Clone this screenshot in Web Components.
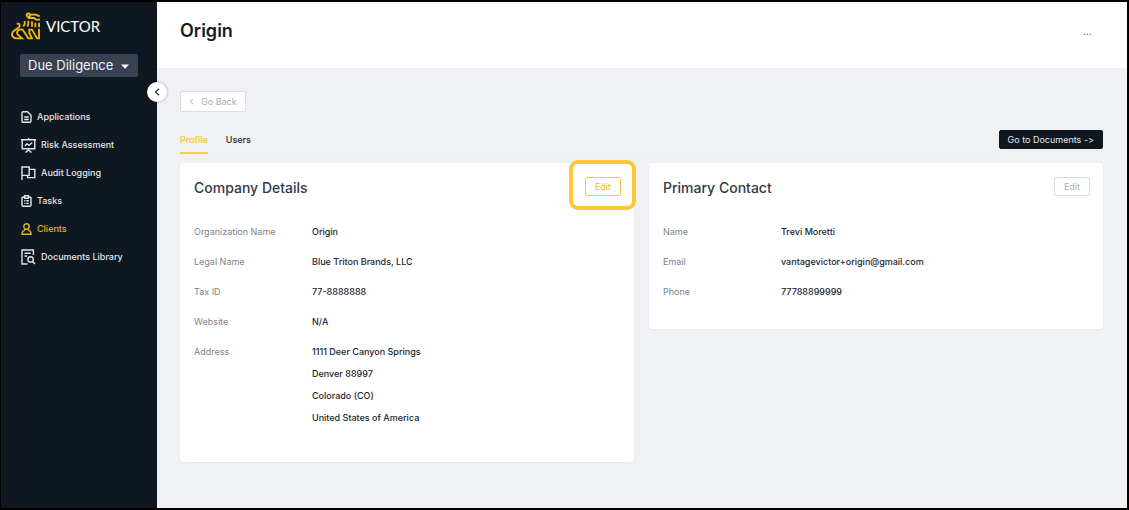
<!DOCTYPE html>
<html lang="en">
<head>
<meta charset="utf-8">
<meta name="viewport" content="width=device-width, initial-scale=1">
<title>Victor – Origin</title>
<style>
  :root {
    --ink: #0f1720;
    --gold: #f9c22e;
    --text: #1c2430;
    --muted: #7c838e;
    --canvas: #eff1f5;
    --line: #dcdde0;
  }
  body { margin: 0; font: 500 9px/22px Inter, "Liberation Sans", sans-serif; color: var(--text); }
</style>
</head>
<body>
<victor-app></victor-app>

<template id="t-app">
  <style>
    :host { display: grid; grid-template-columns: 156px minmax(0, 1fr); min-height: 100vh; box-sizing: border-box;
      border: 2px solid #000; border-left-width: 1px; background: var(--canvas); }
    main { padding: 23px 24px 44px 23px; }
    .bar { display: flex; justify-content: space-between; align-items: flex-start; margin: 18px 0 9px; }
    .cards { display: grid; grid-template-columns: 1fr 1fr; gap: 15px; align-items: start; }
    ul { list-style: none; margin: 0; padding: 0 0 7px; }
  </style>
  <victor-sidebar></victor-sidebar>
  <div>
    <page-header>Origin</page-header>
    <main>
      <v-button kind="back">Go Back</v-button>
      <div class="bar">
        <tab-bar></tab-bar>
        <v-button kind="dark">Go to Documents -&gt;</v-button>
      </div>
      <div class="cards">
        <detail-card heading="Company Details">
          <v-button slot="action" kind="gold" marked>Edit</v-button>
          <detail-row label="Organization Name">Origin</detail-row>
          <detail-row label="Legal Name">Blue Triton Brands, LLC</detail-row>
          <detail-row label="Tax ID">77-8888888</detail-row>
          <detail-row label="Website">N/A</detail-row>
          <detail-row label="Address">
            <ul><li>1111 Deer Canyon Springs</li><li>Denver 88997</li><li>Colorado (CO)</li><li>United States of America</li></ul>
          </detail-row>
        </detail-card>
        <detail-card heading="Primary Contact">
          <v-button slot="action" kind="plain">Edit</v-button>
          <detail-row label="Name">Trevi Moretti</detail-row>
          <detail-row label="Email">vantagevictor+origin@gmail.com</detail-row>
          <detail-row label="Phone">77788899999</detail-row>
        </detail-card>
      </div>
    </main>
  </div>
</template>

<template id="t-sidebar">
  <style>
    :host { display: block; position: relative; background: var(--ink); color: #e4e6e9; }
    .logo { display: flex; align-items: center; gap: 5px; padding: 10px 0 0 10px; color: #fff; font: 400 15px/28px Lato, sans-serif; }
    .logo svg { width: 30px; height: 28px; }
    .pick { position: relative; display: block; width: 118px; margin: 14px 0 0 19px; }
    select { appearance: none; width: 100%; height: 23px; margin: 0; padding: 0 8px; border: 0; border-radius: 2px;
      background: #394152; color: #f2f3f5; font: 400 13px/23px Inter, sans-serif; display: block; }
    .pick svg { position: absolute; right: 9px; top: 10px; width: 8px; height: 5px; pointer-events: none; }
    nav { display: flex; flex-direction: column; margin-top: 26px; padding-left: 20px; }
    .fold { position: absolute; right: -10px; top: 80px; width: 20px; height: 20px; padding: 0; border: 0; border-radius: 50%;
      background: #fff; box-shadow: 0 0 3px rgba(0,0,0,.35); display: grid; place-items: center; z-index: 1; }
    .fold svg { width: 6px; height: 8px; }
  </style>
  <div class="logo">
    <svg viewBox="34 34 90 84" fill="none" stroke="#f0b90b" stroke-width="5.5" aria-hidden="true">
      <circle cx="86" cy="43" r="5"/>
      <path d="M91 42H109L120 47M84 52H103L109 57H121M75 61V70L71 78M86 60V70L83 78M97 62V78M107 66V80M118 66V80"/>
      <path d="M51 69H56Q60 69 60 75Q60 79 55 82L42 91Q36 96 37 104Q40 113 50 113H67L54 101Q49 94 56 89Q62 85 69 87L86 113H97L89 97V87H97L112 113H118V84"/>
    </svg>
    <span>VICTOR</span>
  </div>
  <label class="pick">
    <select aria-label="Workspace"><option>Due Diligence</option></select>
    <svg viewBox="0 0 8 5" aria-hidden="true"><path d="M0 0.5H8L4 4.8Z" fill="#fff"/></svg>
  </label>
  <nav>
    <nav-item icon="file">Applications</nav-item>
    <nav-item icon="board">Risk Assessment</nav-item>
    <nav-item icon="flag">Audit Logging</nav-item>
    <nav-item icon="tasks">Tasks</nav-item>
    <nav-item icon="user" active>Clients</nav-item>
    <nav-item icon="search">Documents Library</nav-item>
  </nav>
  <button class="fold" aria-label="Collapse sidebar"><svg viewBox="0 0 6 8" fill="none" stroke="#222b36" stroke-width="1.2"><path d="M5 .8L1.5 4L5 7.2"/></svg></button>
</template>

<template id="t-nav">
  <style>
    :host { display: block; }
    a { display: flex; align-items: center; gap: 5px; height: 28px; color: inherit; text-decoration: none; }
    :host([active]) a { color: #e5b31a; }
    svg { display: block; fill: none; stroke: currentColor; stroke-width: 1.4; }
  </style>
  <a href="#"><span class="icon"></span><slot></slot></a>
</template>

<template id="t-header">
  <style>
    :host { display: flex; justify-content: space-between; align-items: center; height: 58px; padding: 0 35px 8px 23px; background: #fff; }
    h1 { margin: 0; color: #141b25; font: 600 18px/24px Inter, sans-serif; }
    button { border: 0; background: none; padding: 0; color: #777; font: 500 10px/12px Inter, sans-serif; }
  </style>
  <h1><slot></slot></h1>
  <button aria-label="More actions">...</button>
</template>

<template id="t-button">
  <style>
    :host { display: block; width: max-content; position: relative; }
    button { display: flex; align-items: center; justify-content: center; gap: 7px; box-sizing: border-box; height: 19px; margin: 0;
      padding: 0 9px; border: 1px solid var(--line); border-radius: 2px; background: #fff; color: #a9adb4;
      font: 400 9px/17px Inter, sans-serif; font-variant-ligatures: no-contextual; }
    svg { display: none; width: 5px; height: 7px; }
    :host([kind="back"]) button { height: 21px; padding: 0 8px; }
    :host([kind="back"]) svg { display: block; }
    :host([kind="dark"]) button { padding: 0 8px; background: var(--ink); border-color: var(--ink); color: #e8eaec; }
    :host([kind="gold"]) button { border-color: #f7c453; color: #f7b82d; }
    :host([marked])::after { content: ""; position: absolute; inset: -17px -15px -14px -16px; border: 4px solid #ffc734; border-radius: 9px; pointer-events: none; }
  </style>
  <button><svg viewBox="0 0 5 7" fill="none" stroke="currentColor" aria-hidden="true"><path d="M4.2 .7L1.2 3.5L4.2 6.3"/></svg><slot></slot></button>
</template>

<template id="t-tabs">
  <style>
    :host { display: block; flex: 1; border-bottom: 1px solid #ebedf0; }
    nav { display: flex; gap: 18px; }
    a { display: block; height: 22px; line-height: 20px; color: #1c2430; text-decoration: none; border-bottom: 2px solid transparent; margin-bottom: -1px; }
    a[aria-current] { color: var(--gold); border-color: #f7cd52; }
  </style>
  <nav><a href="#" aria-current="page">Profile</a><a href="#">Users</a></nav>
</template>

<template id="t-card">
  <style>
    :host { display: block; padding: 14px 13px 18px 14px; background: #fff; border-radius: 4px; box-shadow: 0 1px 2px rgba(20,30,50,.06); }
    header { display: flex; justify-content: space-between; align-items: flex-start; margin-bottom: 23px; }
    h2 { margin: 0; color: #323a45; font: 500 14px/21px Inter, sans-serif; }
  </style>
  <header><h2></h2><slot name="action"></slot></header>
  <slot></slot>
</template>

<template id="t-row">
  <style>
    :host { display: block; }
    dl { display: grid; grid-template-columns: 118px minmax(0, 1fr); margin: 0 0 8px; }
    dt { color: var(--muted); font-weight: 400; }
    dd { margin: 0; }
  </style>
  <dl><dt></dt><dd><slot></slot></dd></dl>
</template>

<script>
  const icons = {
    file: [11, 12, '<path d="M1 2Q1 .8 2.2 .8H6.5L10 4.2V10Q10 11.2 8.8 11.2H2.2Q1 11.2 1 10ZM3.2 6H7.8M3.2 8.5H7.8"/>'],
    board: [15, 15, '<path d="M0 1.8H15M1.2 1.8V10.8H13.8V1.8M7.5 0V1.8M7.5 10.8V12.4M4.5 14.5L7.5 12L10.5 14.5M3.8 8L6 5.8L8 7.4L11.2 4.4"/>'],
    flag: [15, 14, '<path d="M1 14V1H8.2V9.4H1M8.2 3.4H13.8V11.6H6.6V9.4"/>'],
    tasks: [11, 12, '<path d="M3.4 2H2.2Q1 2 1 3V10.2Q1 11.3 2.2 11.3H8.8Q10 11.3 10 10.2V3Q10 2 8.8 2H7.6M3.6 .8H7.4V3.2H3.6ZM3.2 5.8H4.3M5.2 5.8H7.8M3.2 8.4H4.3M5.2 8.4H7.8"/>'],
    user: [11, 12, '<circle cx="5.5" cy="3.5" r="2.7"/><path d="M3.8 6.3L3.4 7.4Q1 8.2 1 11.2H10Q10 8.2 7.6 7.4L7.2 6.3"/>'],
    search: [15, 16, '<path d="M12.4 6V1H1V15H6.5M3.5 4.2H9.8M3.5 7H6"/><circle cx="9.6" cy="10.4" r="2.7"/><path d="M11.5 12.4L14 15"/>']
  };

  function define(name, templateId, setup) {
    customElements.define(name, class extends HTMLElement {
      constructor() {
        super();
        this.attachShadow({ mode: "open" }).append(document.getElementById(templateId).content.cloneNode(true));
      }
      connectedCallback() { if (setup) setup(this, this.shadowRoot); }
    });
  }

  define("v-button", "t-button");
  define("tab-bar", "t-tabs");
  define("page-header", "t-header");
  define("detail-row", "t-row", (el, root) => { root.querySelector("dt").textContent = el.getAttribute("label"); });
  define("detail-card", "t-card", (el, root) => { root.querySelector("h2").textContent = el.getAttribute("heading"); });
  define("nav-item", "t-nav", (el, root) => {
    const [w, h, body] = icons[el.getAttribute("icon")];
    root.querySelector(".icon").innerHTML = `<svg width="${w}" height="${h}" viewBox="0 0 ${w} ${h}" aria-hidden="true">${body}</svg>`;
  });
  define("victor-sidebar", "t-sidebar");
  define("victor-app", "t-app");
</script>
</body>
</html>
